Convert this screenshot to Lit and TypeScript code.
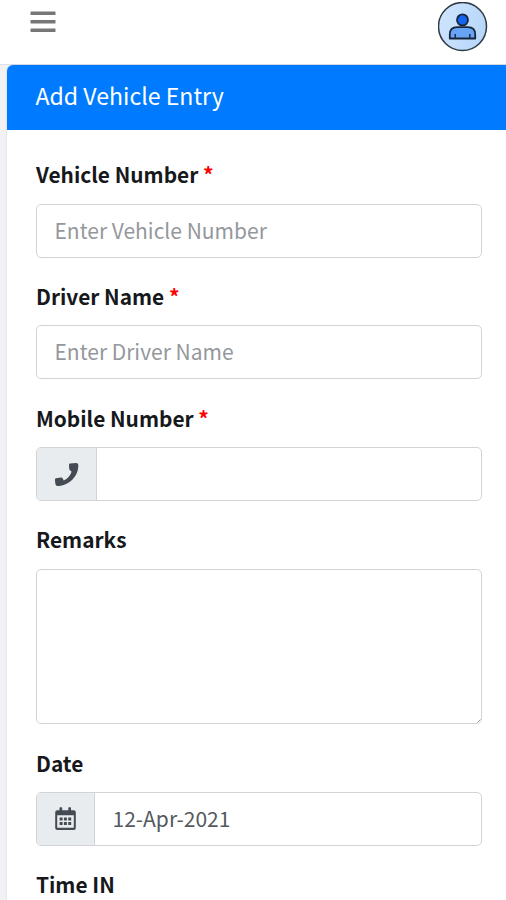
import { LitElement, html, css, svg, nothing } from "lit";
import { customElement, property } from "lit/decorators.js";

const phoneIcon = svg`<svg width="25" height="25" viewBox="0 0 25 25" fill="#444b53"><path d="M16 1.500L22.300.9Q24 .8 24.300 3C24.800 14 15 24 3.500 24Q1.800 24 1.400 22L.9 18Q.8 16.600 2 16.300L7 15.500Q8 15.300 8.600 16.300L9.800 18.400C13.500 17 16.300 13.500 17.600 9.800L16.200 8.500Q15.300 7.800 15.200 6.500L15 2.800Q15 1.600 16 1.500z"/></svg>`;

const calendarIcon = svg`<svg width="21" height="24" viewBox="0 0 21 24" fill="#444b53">
  <rect x="4.500" y="0.300" width="2.700" height="4.500" rx="0.600"/>
  <rect x="13.300" y="0.300" width="2.700" height="4.500" rx="0.600"/>
  <path fill-rule="evenodd" d="M2.200 3.200h16.600a2 2 0 0 1 2 2v15.800a2 2 0 0 1-2 2H2.200a2 2 0 0 1-2-2V5.200a2 2 0 0 1 2-2zM2.200 8.200v12.500h16.600V8.200z"/>
  <path d="M4.600 10.600h3v3h-3zM8.900 10.600h3v3h-3zM13.200 10.600h3v3h-3zM4.600 15h3v3h-3zM8.900 15h3v3h-3zM13.200 15h3v3h-3z"/>
</svg>`;

@customElement("form-field")
class FormField extends LitElement {
  @property() label = "";
  @property({ type: Boolean }) required = false;

  static styles = css`
    :host { display: block; }
    .label {
      height: 28px;
      line-height: 26px;
      margin-bottom: 14.5px;
      font-size: 20.85px;
      font-weight: 700;
      color: #16181b;
      white-space: pre;
    }
    .star { color: #f00; }
  `;

  render() {
    return html`<div class="label">${this.label}${this.required ? html` <span class="star">*</span>` : nothing}</div><slot></slot>`;
  }
}

@customElement("app-root")
class AppRoot extends LitElement {
  static styles = css`
    :host {
      display: block;
      height: 900px;
      overflow: hidden;
      background: #f0f2f6;
      font-family: "Noto Sans CJK SC", "Noto Sans", sans-serif;
    }
    * { box-sizing: border-box; }
    .bar {
      height: 65px;
      background: #fff;
      border-bottom: 1px solid #dee2e6;
      display: flex;
      justify-content: space-between;
      padding: 2px 18px 0 30px;
    }
    .menu { margin-top: 8.5px; display: block; }
    .avatar { display: block; }
    .card {
      margin-left: 6.5px;
      height: 835px;
      background: #fff;
      border-radius: 6px 0 0 0;
      box-shadow: 0 0 2px rgba(0, 0, 0, 0.15);
      overflow: hidden;
    }
    .head {
      height: 65px;
      background: #007bff;
      color: #fff;
      font-size: 23.1px;
      line-height: 61px;
      padding-left: 29px;
    }
    .body {
      padding: 31px 24px 0 29.5px;
      display: flex;
      flex-direction: column;
      gap: 25.25px;
    }
    .control {
      height: 54px;
      display: flex;
      align-items: stretch;
      border: 1.5px solid #d0d4d9;
      border-radius: 5px;
      background: #fff;
      overflow: hidden;
      font-size: 21px;
      line-height: 50px;
      color: #54595e;
    }
    .area { height: 155.5px; justify-content: flex-end; align-items: flex-end; }
    .placeholder { color: #94989c; }
    .text { padding-left: 17.5px; }
    .addon {
      width: 60px;
      background: #e9ecef;
      border-right: 1px solid #d0d4d9;
      display: flex;
      align-items: center;
      justify-content: center;
    }
    .narrow { width: 58px; padding-right: 1px; }
  `;

  render() {
    return html`
      <div class="bar">
        <svg class="menu" width="26" height="24" viewBox="0 0 26 24" fill="#777">
          <rect x="0.5" y="0.5" width="25" height="3.5" rx="0.5"/>
          <rect x="0.5" y="9" width="25" height="3.5" rx="0.5"/>
          <rect x="0.5" y="17.5" width="25" height="3.5" rx="0.5"/>
        </svg>
        <svg class="avatar" width="50" height="50" viewBox="0 0 50 50" stroke="#18243a">
          <defs>
            <linearGradient id="disc" x1="0" y1="0" x2="1" y2="0.3">
              <stop offset="0" stop-color="#d2e6fd"/>
              <stop offset="1" stop-color="#b8d7fa"/>
            </linearGradient>
          </defs>
          <circle cx="24.5" cy="24.500" r="24" fill="url(#disc)" stroke="#303a46" stroke-width="1.5"/>
          <path d="M11.800 36.500v-4q0-7.300 7.500-7.300h10.400q7.500 0 7.500 7.300v4z" fill="#68a4f5" stroke-width="1.8" stroke-linejoin="round"/>
          <path d="M17.200 36v-4M31.800 36v-4" stroke-width="1.4"/>
          <circle cx="24.500" cy="17.900" r="5.500" fill="#1464ee" stroke-width="1.8"/>
        </svg>
      </div>
      <div class="card">
        <div class="head">Add Vehicle Entry</div>
        <div class="body">
          <form-field label="Vehicle Number" required>
            <div class="control"><span class="text placeholder">Enter Vehicle Number</span></div>
          </form-field>
          <form-field label="Driver Name" required>
            <div class="control"><span class="text placeholder">Enter Driver Name</span></div>
          </form-field>
          <form-field label="Mobile Number" required>
            <div class="control"><span class="addon">${phoneIcon}</span></div>
          </form-field>
          <form-field label="Remarks">
            <div class="control area">
              <svg width="4" height="4" viewBox="0 0 4 4"><path d="M0.5 3.5l3-3" stroke="#999"/></svg>
            </div>
          </form-field>
          <form-field label="Date">
            <div class="control"><span class="addon narrow">${calendarIcon}</span><span class="text">12-Apr-2021</span></div>
          </form-field>
          <form-field label="Time IN"></form-field>
        </div>
      </div>
    `;
  }
}
